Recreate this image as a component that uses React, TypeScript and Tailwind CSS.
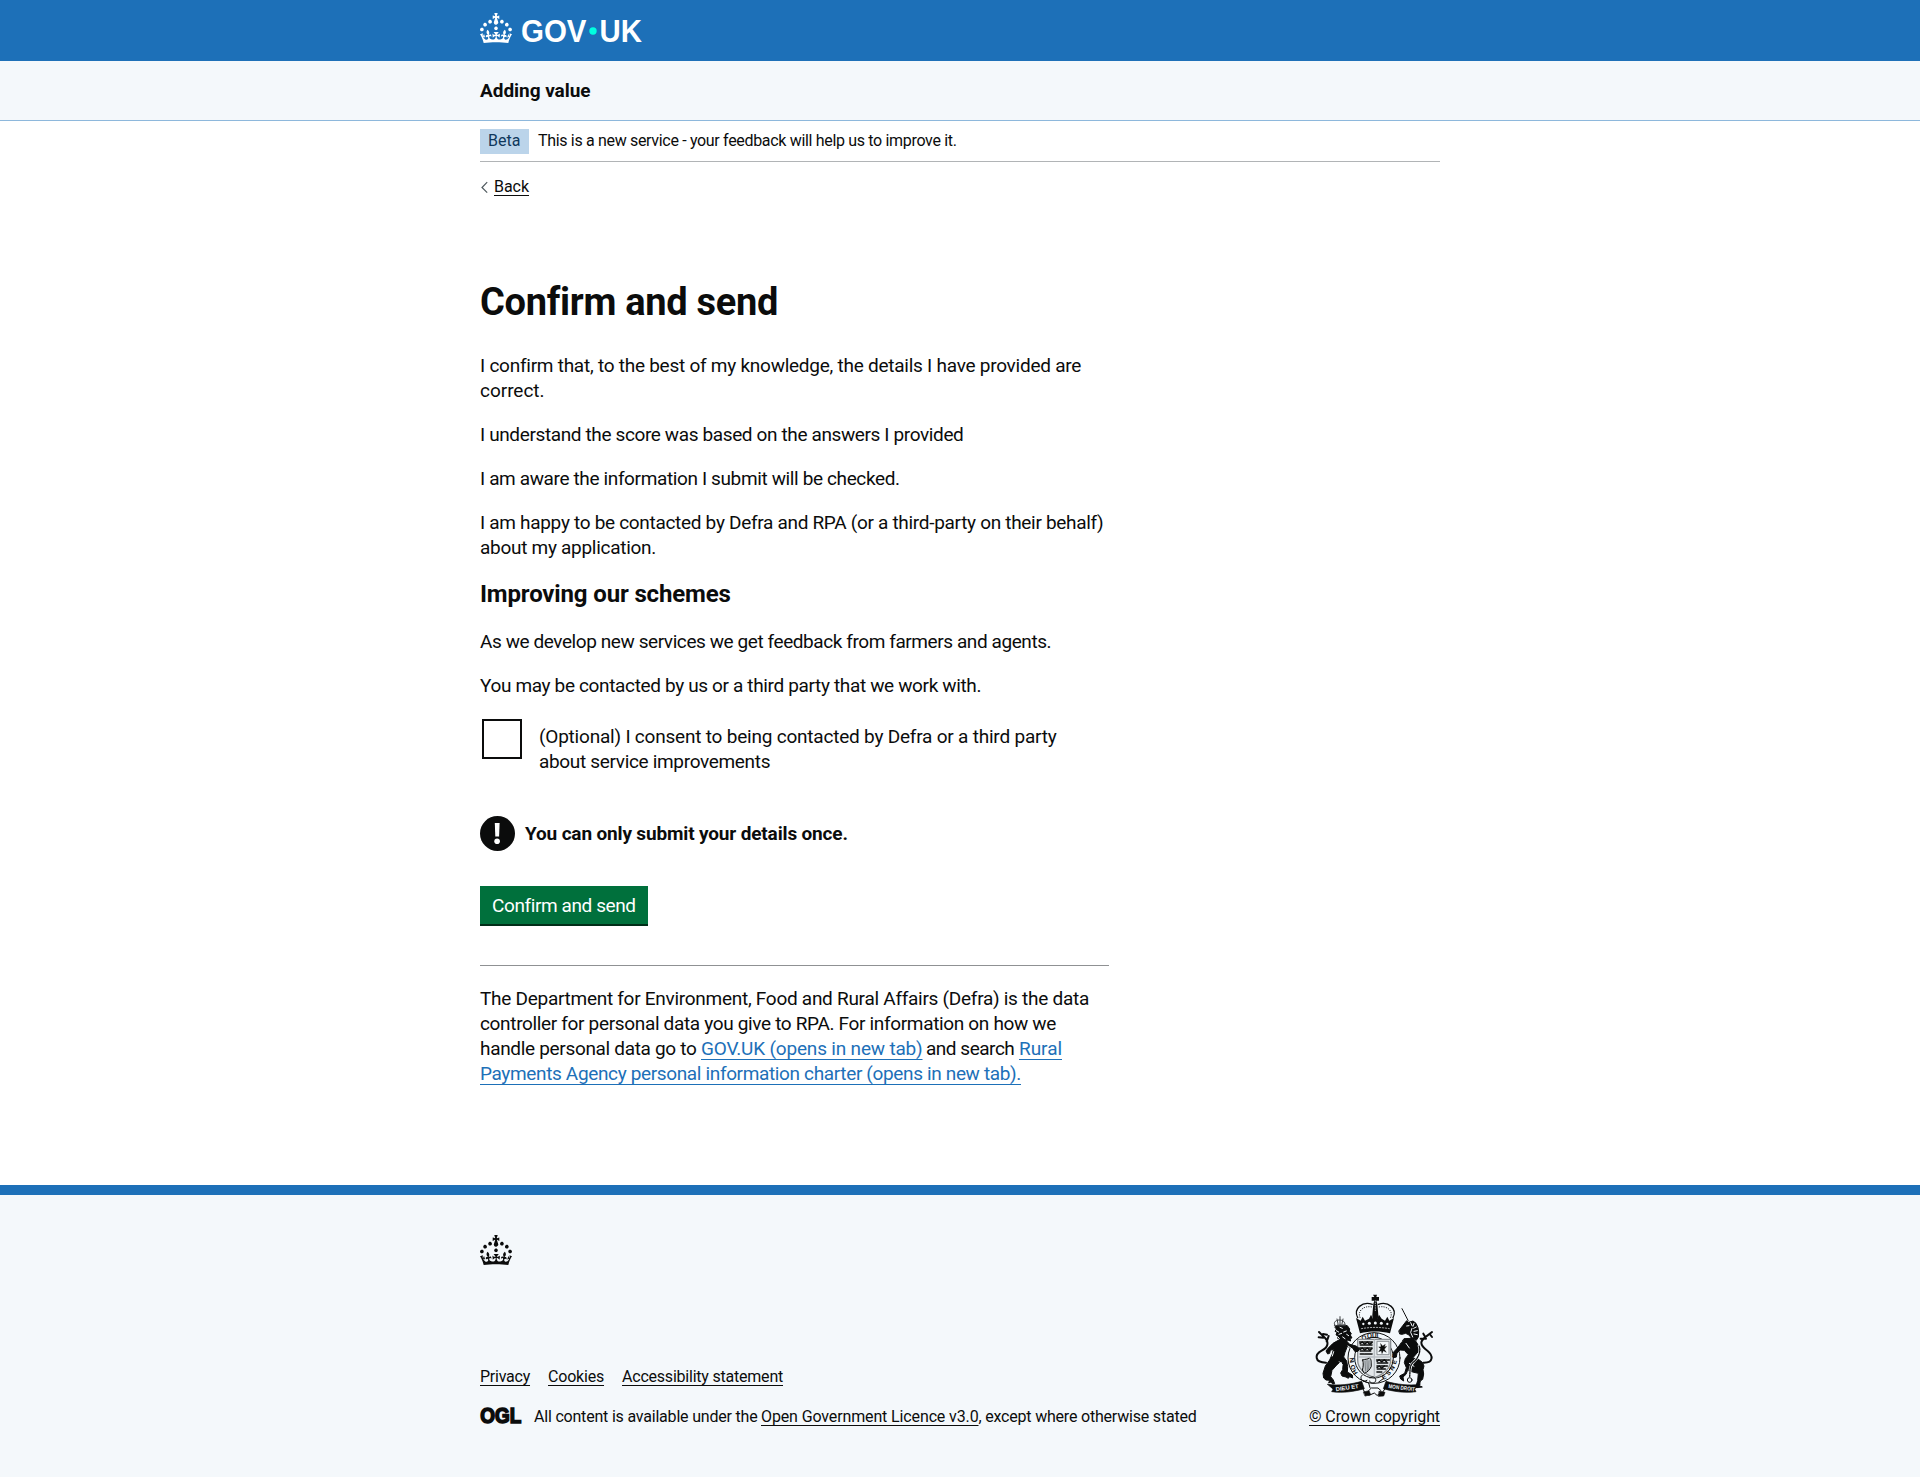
import type { ReactNode } from "react";

const CROWN =
  "M22.6 10.4c-1 .4-2-.1-2.4-1-.4-.9.1-2 1-2.4.9-.4 2 .1 2.4 1s-.1 2-1 2.4m-5.9 6.7c-.9.4-2-.1-2.4-1-.4-.9.1-2 1-2.4.9-.4 2 .1 2.4 1s-.1 2-1 2.4m10.8-3.7c-1 .4-2-.1-2.4-1-.4-.9.1-2 1-2.4.9-.4 2 .1 2.4 1s0 2-1 2.4m3.3 4.8c-1 .4-2-.1-2.4-1-.4-.9.1-2 1-2.4.9-.4 2 .1 2.4 1s-.1 2-1 2.4M17 4.7l2.3 1.2V2.5l-2.3.7-.2-.2.9-3h-3.4l.9 3-.2.2c-.1.1-2.3-.7-2.3-.7v3.4L15 4.7c.1.1.1.2.2.2l-1.3 4c-.1.2-.1.4-.1.6 0 1.1.8 2 1.9 2.2h.7c1-.2 1.9-1.1 1.9-2.1 0-.2 0-.4-.1-.6l-1.3-4c-.1-.2 0-.2.1-.3m-7.6 5.7c.9.4 2-.1 2.4-1 .4-.9-.1-2-1-2.4-.9-.4-2 .1-2.4 1s0 2 1 2.4m-5 3c.9.4 2-.1 2.4-1 .4-.9-.1-2-1-2.4-.9-.4-2 .1-2.4 1s.1 2 1 2.4m-3.2 4.8c.9.4 2-.1 2.4-1 .4-.9-.1-2-1-2.4-.9-.4-2 .1-2.4 1s0 2 1 2.4m14.8 11c4.4 0 8.6.3 12.3.8 1.1-4.5 2.4-7 3.7-8.8l-2.5-.9c.2 1.3.3 1.9 0 2.7-.4-.4-.8-1.1-1.1-2.3l-1.2 4c.7-.5 1.3-.8 2-.9-1.1 2.5-2.6 3.1-3.5 3-1.1-.2-1.7-1.2-1.5-2.1.3-1.2 1.5-1.5 2.1-.1 1.1-2.3-.8-3-2-2.3 1.9-1.9 2.1-3.5.6-5.6-2.1 1.6-2.1 3.2-1.2 5.5-1.2-1.4-3.2-.6-2.5 1.6.9-1.4 2.1-.5 1.9.8-.2 1.1-1.7 2.1-3.5 1.9-2.7-.2-2.9-2.1-2.9-3.6.7-.1 1.9.5 2.9 1.9l.4-4.3c-1.1 1.1-2.1 1.4-3.2 1.4.4-1.2 2.1-3 2.1-3h-5.4s1.7 1.9 2.1 3c-1.1 0-2.1-.2-3.2-1.4l.4 4.3c1-1.4 2.2-2 2.9-1.9-.1 1.5-.2 3.4-2.9 3.6-1.9.2-3.4-.8-3.5-1.9-.2-1.3 1-2.2 1.9-.8.7-2.3-1.2-3-2.5-1.6.9-2.2.9-3.9-1.2-5.5-1.5 2-1.3 3.7.6 5.6-1.2-.7-3.1 0-2 2.3.6-1.4 1.8-1.1 2.1.1.2.9-.3 1.9-1.5 2.1-.9.2-2.4-.5-3.5-3 .6 0 1.2.3 2 .9l-1.2-4c-.3 1.1-.7 1.9-1.1 2.3-.3-.8-.2-1.4 0-2.7l-2.9.9C1.3 23 2.6 25.5 3.7 30c3.7-.5 7.9-.8 12.3-.8";

function Logo() {
  return (
    <svg width="164" height="30" viewBox="0 0 164 30" fill="#fff" className="block overflow-visible" aria-label="GOV.UK">
      <path fillRule="evenodd" d={CROWN} />
      <g className="font-['Liberation_Sans',sans-serif] text-[31.5px] font-bold">
        <text x="41" y="28.7" textLength="65.5" lengthAdjust="spacingAndGlyphs">GOV</text>
        <text x="119.6" y="28.7" textLength="42.4" lengthAdjust="spacingAndGlyphs">UK</text>
      </g>
      <circle cx="113" cy="18" r="3.7" fill="#00ffe0" />
    </svg>
  );
}

function Crest() {
  return (
    <svg width="125" height="104" viewBox="68 42 375 312" className="block overflow-visible" fill="none" stroke="#0b0c0c" strokeLinecap="round" strokeLinejoin="round" aria-hidden="true">
      {/* crown */}
      <g fill="#0b0c0c" stroke="none">
        <path d="M251 44h12l-2 7h8v11h-8l3 9 3 34c0 9-3 15-9 15s-10-6-9-15l3-34 3-9h-8V51h8z" />
        <path d="M200 114l14 8 6-12 7 12 12-6 6-12 6 12 6-10 6 10 6-12 8 12 10 6 7-12 6 12 14-8-12 46c-28-7-62-7-90 0z" />
      </g>
      <path d="M205 113c-14-27 14-50 44-40M311 113c14-27-14-50-44-40" strokeWidth="4" />
      <path d="M212 112c-8-20 12-36 36-31M304 112c8-20-12-36-36-31" strokeWidth="3" strokeDasharray="1 6" />
      <path d="M258 62v34" stroke="#f4f8fb" strokeWidth="2" strokeDasharray="2 5" />
      <path d="M216 146c28-5 56-5 84 0" stroke="#f4f8fb" strokeWidth="2" strokeDasharray="4 5" />
      <g fill="#f4f8fb" stroke="none">
        <circle cx="222" cy="132" r="3.5" /><circle cx="240" cy="130" r="4.5" /><circle cx="258" cy="129" r="4.5" /><circle cx="276" cy="130" r="4.5" /><circle cx="294" cy="132" r="3.5" />
      </g>
      {/* garter */}
      <ellipse cx="254" cy="234" rx="78" ry="76" strokeWidth="3" fill="#f4f8fb" />
      <ellipse cx="254" cy="233" rx="58" ry="61" strokeWidth="3" />
      <g fill="#0b0c0c" stroke="none" className="font-['Liberation_Sans',sans-serif] text-[19px] font-bold">
        <text x="217" y="180" transform="rotate(-18 222 174)">O</text>
        <text x="233" y="175">QUI</text>
        <text x="181" y="256" transform="rotate(80 188 250)">I</text>
        <text x="181" y="246" transform="rotate(80 188 240)">N</text>
        <text x="183" y="268" transform="rotate(66 190 262)">O</text>
        <text x="190" y="283" transform="rotate(55 197 276)">H</text>
        <text x="309" y="232" transform="rotate(-85 316 226)">P</text>
        <text x="309" y="252" transform="rotate(-72 316 246)">E</text>
        <text x="302" y="270" transform="rotate(-58 309 264)">N</text>
        <text x="291" y="285" transform="rotate(-46 298 279)">S</text>
        <text x="278" y="297" transform="rotate(-30 285 291)">E</text>
      </g>
      {/* quartered shield */}
      <path d="M205 178h99v61c0 27-22 44-49 54-27-10-50-27-50-54z" fill="#e3e7ea" stroke="#8a8f93" strokeWidth="4" />
      <g strokeWidth="5">
        <path d="M211 186h38M213 195h35M211 204h37M213 213h34M213 222h35" strokeDasharray="10 3 6 2" />
        <path d="M212 191l7-5 7 7 8-7 7 7 7-5M212 209l7-5 7 7 8-7 7 7 7-5" strokeWidth="4" />
        <path d="M262 240h38M264 249h34M263 258h32M264 267h24M263 276h14" strokeDasharray="10 3 6 2" />
        <path d="M263 244l7-5 7 7 8-7 7 7M263 263l7-5 7 7 8-7" strokeWidth="4" />
      </g>
      <rect x="264" y="184" width="35" height="40" strokeWidth="3" stroke="#8a8f93" fill="#f4f8fb" />
      <path d="M274 191l6 7 8-5-3 8 7-2-7 9 6 9-9-5-4 9-2-9-8 3 6-9-6-5 7-1z" fill="#0b0c0c" strokeWidth="1" />
      <path d="M220 240c8-4 15 0 20-7 8 6 5 16 6 26-4 10-12 18-21 21l-6-10c3-10 4-19 1-30z" fill="#c3c8cc" strokeWidth="3" />
      <path d="M227 243l2 30M233 241l1 31M239 242l-1 26" stroke="#5b6064" strokeWidth="2" />
      <path d="M255 180v110M208 231h95" stroke="#b9bec3" strokeWidth="4" />
      {/* lion */}
      <g fill="#0b0c0c" strokeWidth="3">
        <path d="M137 141l7-6h20l10 2 7 10-1 6 6 8-3 4 5 9-6 1 2 8-9-3-6 6-6-7-8 3-2-8-8 1 2-8-7-2 3-8-6-3 4-6z" />
        <path d="M152 178l-21 12-15 15-6 8 5 9 6-2 2-9 9-3-3 14-8 18-13 18-7 22 2 14 7 6 11 1-3 8 7-3 5 6 6-1-4-11-8-10 4-19 15-17 9-8 6-1 3 11-1 13-6 10 4 9 12 3 7 4 4-5 9 4-1-9-15-9 1-16-3-17-9-12 4-14 7-18 17 7 6 9 9-1 5-8-11-8-19-5-10-11-6-12-16-5z" />
      </g>
      <path d="M141 152l7 4M152 142l7 3M149 163l8-3M163 156l8-3M160 171l7 5M172 163l6 4M146 171l4 4M133 215l-4 13M150 245l9 9M176 198l14 10" stroke="#f4f8fb" strokeWidth="3" />
      <path d="M136 134c-9-16 32-22 31 0M152 110v23M143 117l3 14M161 117l-3 14M135 137h33" strokeWidth="3" stroke="#3b3e40" />
      <path d="M110 248c-36 0-34-25-13-36 23-12 22-28 5-43l-13-13M102 173l-14-1M101 162l12 2M112 185l6-17" strokeWidth="6" />
      {/* unicorn */}
      <path d="M338 86l19 37" strokeWidth="3" strokeDasharray="5 2" />
      <g fill="#0b0c0c" strokeWidth="3">
        <path d="M329 152l12-16 11-14 6 5 13-4 9 7 6 13 2 13-1 15-6 10-13-4-9-12-10-5-11 3-6-1z" />
        <path d="M345 176l20-1 14 8 8 13 2 16-10 12-9 10 16 3 13 10 5 11-3 11 2 13-3 16-7 5-3 14 9 4-17 2-2-5 5-16 2-22-17-4-15-5-5 12-9 8 2 12-9-6-3-9 15-8 5-17-6-15 3-12 9-12-12-13-13-1-9 9-2 12-9 2 1-17 13-14z" />
      </g>
      <path d="M364 128l4 9M374 130l-3 9M381 141l-8 4M384 152l-10 2M384 164l-10-2M352 138l7-1M368 145l-4 12 6 14M360 250l14 9M336 185l-12 3M350 190l10 14" stroke="#f4f8fb" strokeWidth="3" />
      <path d="M389 198c7 13-2 37-16 48-14 10-10 28-12 43" strokeWidth="8" stroke="#f4f8fb" />
      <path d="M389 198c7 13-2 37-16 48-14 10-10 28-12 43" strokeWidth="4" strokeDasharray="5 3" />
      <circle cx="361" cy="300" r="7" strokeWidth="3" />
      <path d="M402 248c32 1 29-22 13-35-28-20-21-31-5-43l18-14M410 176l-16 0M406 168l-4-7M421 162l7 9" strokeWidth="6" />
      {/* motto scroll */}
      <path d="M115 313c32 5 70 0 102-9l8 22c-29 8-61 14-98 9l4-7zM392 313c-32 5-70 0-102-9l-8 22c29 8 61 14 98 9l-4-7z" fill="#0b0c0c" strokeWidth="2" />
      <g fill="#f4f8fb" stroke="none" className="font-['Liberation_Sans',sans-serif] text-[17px] font-bold">
        <text x="139" y="329" textLength="69" lengthAdjust="spacingAndGlyphs" transform="rotate(-8 173 323)">DIEU ET</text>
        <text x="297" y="329" textLength="80" lengthAdjust="spacingAndGlyphs" transform="rotate(7 337 323)">MON DROIT</text>
      </g>
      <path d="M218 286c-10 10 3 22 15 15M242 294c8-8 19-1 17 8s-17 10-18 1M222 303l16 6 4 14M268 306l14-10M219 322l8 18 12 6 16-7 8 7 14-5 12-18M238 332l8-8h20l9 8" strokeWidth="3" />
      <path d="M223 336l16-4 5 12-16 4zM270 334l17 3-4 11-15 1z" fill="#0b0c0c" strokeWidth="2" />
    </svg>
  );
}

function Link({ children, className = "" }: { children: ReactNode; className?: string }) {
  return (
    <a href="#" className={`underline decoration-1 [text-decoration-skip-ink:none] ${className}`}>
      {children}
    </a>
  );
}

export default function App() {
  return (
    <div className="h-[1477px] overflow-hidden bg-white font-[Roboto,sans-serif] text-[19px] leading-[25px] text-[#0b0c0c]">
      <header className="h-[61px] bg-[#1d70b8] pt-[13px]">
        <div className="mx-auto w-[960px]"><Logo /></div>
      </header>
      <div className="h-[60px] border-b border-[#8eb8dc] bg-[#f4f8fb] pt-[17px]">
        <div className="mx-auto w-[960px] font-bold tracking-[-0.041px]">Adding value</div>
      </div>

      <div className="mx-auto w-[960px]">
        <div className="flex h-[41px] items-start border-b border-[#b1b4b6] pt-2 text-base leading-6">
          <strong className="h-[25px] w-[49px] bg-[#bbd4ea] pl-2 font-normal text-[#0f385c]">Beta</strong>
          <span className="ml-[9px] whitespace-nowrap tracking-[-0.325px]">This is a new service - your feedback will help us to improve it.</span>
        </div>
        <div className="mt-[15px] flex h-5 items-center text-base leading-5">
          <svg width="14" height="20" viewBox="0 0 14 20" fill="none" stroke="#505a5f" strokeWidth="1.2"><path d="M7.2 5.2 2 10.5l5.2 5.2" /></svg>
          <Link className="tracking-[-0.039px] underline-offset-[3px]">Back</Link>
        </div>

        <main className="h-[988px] w-[629px] pt-[82px]">
          <h1 className="h-[74px] whitespace-nowrap text-[38px] leading-[46px] font-bold tracking-[-0.29px]">Confirm and send</h1>
          <div className="flex flex-col gap-[19px] whitespace-nowrap">
            <p>
              <span className="block tracking-[-0.25px]">I confirm that, to the best of my knowledge, the details I have provided are</span>
              <span className="block tracking-[-0.03px]">correct.</span>
            </p>
            <p className="tracking-[-0.375px]">I understand the score was based on the answers I provided</p>
            <p className="tracking-[-0.37px]">I am aware the information I submit will be checked.</p>
            <p>
              <span className="block tracking-[-0.305px]">I am happy to be contacted by Defra and RPA (or a third-party on their behalf)</span>
              <span className="block tracking-[-0.285px]">about my application.</span>
            </p>
          </div>
          <h2 className="mt-[19px] mb-5 text-2xl leading-[30px] font-bold tracking-[-0.15px]">Improving our schemes</h2>
          <div className="flex flex-col gap-[19px] whitespace-nowrap">
            <p className="tracking-[-0.42px]">As we develop new services we get feedback from farmers and agents.</p>
            <p className="tracking-[-0.352px]">You may be contacted by us or a third party that we work with.</p>
          </div>
          <label className="mt-[21px] flex whitespace-nowrap pl-0.5">
            <span className="size-10 border-2 border-[#0b0c0c]" />
            <span className="ml-[17px] pt-[5px]">
              <span className="block tracking-[-0.21px]">(Optional) I consent to being contacted by Defra or a third party</span>
              <span className="block tracking-[-0.325px]">about service improvements</span>
            </span>
          </label>
          <div className="mt-[42px] flex h-[35px] items-center">
            <svg width="35" height="35" viewBox="0 0 35 35">
              <circle cx="17.5" cy="17.5" r="17.5" fill="#0b0c0c" />
              <path d="M14.8 7h4.8l-.5 13.6h-3.8z" fill="#fff" />
              <circle cx="17.1" cy="25.2" r="2.8" fill="#fff" />
            </svg>
            <strong className="ml-2.5 font-bold tracking-[-0.155px]">You can only submit your details once.</strong>
          </div>
          <button className="mt-[35px] block h-[38px] w-[168px] whitespace-nowrap bg-[#00703c] pt-px pl-3 text-left leading-[38px] tracking-[-0.4px] text-white shadow-[0_2px_0_#002d18]">
            Confirm and send
          </button>
          <hr className="mt-[41px] border-t border-[#8f9193]" />
          <p className="mt-5 whitespace-nowrap">
            <span className="block tracking-[-0.275px]">The Department for Environment, Food and Rural Affairs (Defra) is the data</span>
            <span className="block tracking-[-0.337px]">controller for personal data you give to RPA. For information on how we</span>
            <span className="flex">
              <span className="w-[221px] tracking-[-0.319px]">handle personal data go to</span>
              <Link className="w-[225px] tracking-[-0.184px] text-[#1d70b8] underline-offset-4">GOV.UK (opens in new tab)</Link>
              <span className="w-[93px] tracking-[-0.48px]">and search</span>
              <Link className="tracking-[-0.041px] text-[#1d70b8] underline-offset-4">Rural</Link>
            </span>
            <Link className="block tracking-[-0.353px] text-[#1d70b8] underline-offset-4">Payments Agency personal information charter (opens in new tab).</Link>
          </p>
        </main>
      </div>

      <footer className="h-[292px] border-t-[10px] border-[#1d70b8] bg-[#f4f8fb] pt-10 text-base leading-5">
        <div className="mx-auto w-[960px]">
          <svg width="32" height="30" viewBox="0 0 32 30" fill="#0b0c0c" className="block"><path fillRule="evenodd" d={CROWN} /></svg>
          <div className="flex h-[162px] items-end justify-between whitespace-nowrap">
            <div>
              <div className="mb-5 flex gap-[18px] underline-offset-[3px]">
                <Link className="tracking-[-0.241px]">Privacy</Link>
                <Link className="tracking-[-0.201px]">Cookies</Link>
                <Link className="tracking-[-0.218px]">Accessibility statement</Link>
              </div>
              <div className="flex underline-offset-[3px]">
                <svg width="42" height="20" viewBox="0 0 42 20" fill="#0b0c0c" stroke="#0b0c0c" className="overflow-visible" aria-label="OGL">
                  <text x="0.3" y="16.4" strokeWidth="1.6" textLength="41" lengthAdjust="spacingAndGlyphs" className="font-['Liberation_Sans',sans-serif] text-[21.5px] font-bold">OGL</text>
                </svg>
                <span className="ml-3 w-[227px] tracking-[-0.2px]">All content is available under the</span>
                <Link className="tracking-[-0.129px]">Open Government Licence v3.0</Link>
                <span className="tracking-[-0.2px]">, except where otherwise stated</span>
              </div>
            </div>
            <div className="flex w-[131px] flex-col items-center">
              <Crest />
              <Link className="mt-[9px] tracking-[-0.087px] underline-offset-[3px]">© Crown copyright</Link>
            </div>
          </div>
        </div>
      </footer>
    </div>
  );
}
